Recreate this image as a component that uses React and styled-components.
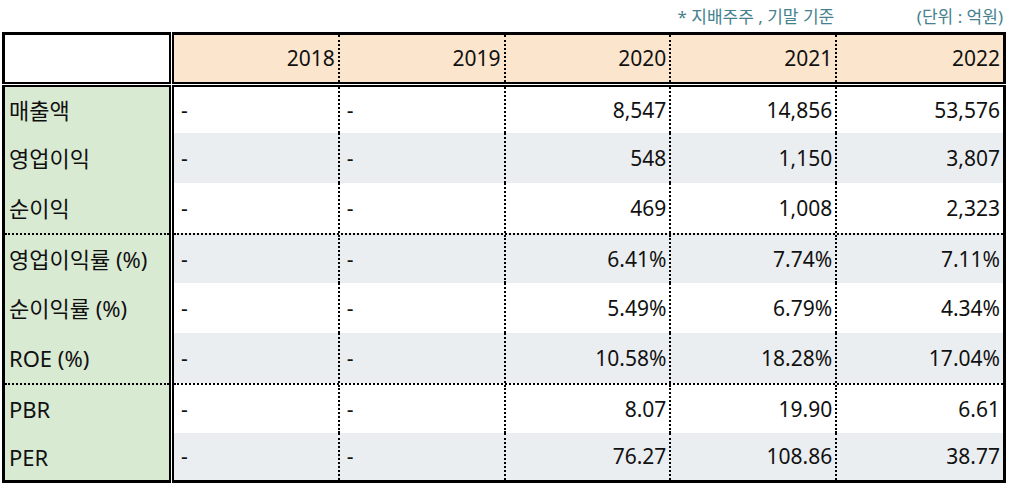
import React from 'react'
import styled, { createGlobalStyle } from 'styled-components'

const GlobalStyle = createGlobalStyle`
    body {
        margin: 0;
        background: #fff;
        font-family: "Noto Sans", "Noto Sans CJK KR", sans-serif;
        color: #111;
    }
`

const YEARS = ['2018', '2019', '2020', '2021', '2022']

const ROWS = [
    { label: '매출액', values: ['-', '-', '8,547', '14,856', '53,576'] },
    { label: '영업이익', values: ['-', '-', '548', '1,150', '3,807'] },
    { label: '순이익', values: ['-', '-', '469', '1,008', '2,323'] },
    { label: '영업이익률 (%)', values: ['-', '-', '6.41%', '7.74%', '7.11%'], sep: true },
    { label: '순이익률 (%)', values: ['-', '-', '5.49%', '6.79%', '4.34%'] },
    { label: 'ROE (%)', values: ['-', '-', '10.58%', '18.28%', '17.04%'] },
    { label: 'PBR', values: ['-', '-', '8.07', '19.90', '6.61'], sep: true },
    { label: 'PER', values: ['-', '-', '76.27', '108.86', '38.77'] },
]

const Page = styled.div`
    width: 1004px;
    margin-left: 2px;
`

const NoteRow = styled.div`
    display: grid;
    grid-template-columns: 172px repeat(5, 1fr);
    height: 32px;
    align-items: center;
    padding-right: 3px;
    font-size: 17px;
    color: #45818e;
`

const Note = styled.div`
    grid-column: ${p => p.$col};
    text-align: right;
    padding-right: ${p => p.$pad || 0}px;
    white-space: nowrap;
    line-height: 1;
`

const Table = styled.div`
    display: grid;
    grid-template-columns: 169px 834px;
    grid-template-rows: 52px 398px;
    gap: 1px;
`

const Box = styled.div`
    box-sizing: border-box;
    border: solid #000;
    border-width: ${p => (p.$top ? '3px' : '2px')} ${p => (p.$left ? '2px' : '3px')}
        ${p => (p.$top ? '2px' : '3px')} ${p => (p.$left ? '3px' : '2px')};
    background: ${p => p.$bg};
`

const YearRow = styled.div`
    display: grid;
    grid-template-columns: repeat(5, 1fr);
    height: 100%;
`

const Rows = styled.div`
    display: grid;
    grid-template-rows: 46px repeat(6, 50px) 47px;
    height: 100%;
`

const DataRow = styled.div`
    display: grid;
    grid-template-columns: repeat(5, 1fr);
    background: ${p => (p.$shade ? '#ebeef1' : '#fff')};
    border-top: ${p => (p.$sep ? '2px dotted #000' : 'none')};
    box-sizing: border-box;
`

const Cell = styled.div`
    display: flex;
    align-items: center;
    justify-content: ${p => (p.$right ? 'flex-end' : 'flex-start')};
    padding: 0 ${p => (p.$right ? '3px' : '0')} 0 ${p => (p.$right ? '0' : '7px')};
    border-right: ${p => (p.$last ? 'none' : '2px dotted #000')};
    font-size: 21px;
    line-height: 1;
    white-space: nowrap;
    box-sizing: border-box;
`

const Label = styled.div`
    display: flex;
    align-items: center;
    padding-left: 4px;
    font-size: 22px;
    line-height: 1;
    white-space: nowrap;
    border-top: ${p => (p.$sep ? '2px dotted #000' : 'none')};
    box-sizing: border-box;
`

const App = () => (
    <>
        <GlobalStyle />
        <Page>
            <NoteRow>
                <Note $col={5} $pad={3}>* 지배주주 , 기말 기준</Note>
                <Note $col={6}>(단위 : 억원)</Note>
            </NoteRow>
            <Table>
                <Box $top $left $bg="#fff" />
                <Box $top $bg="#fce5cd">
                    <YearRow>
                        {YEARS.map((y, i) => (
                            <Cell key={y} $right $last={i === YEARS.length - 1}>{y}</Cell>
                        ))}
                    </YearRow>
                </Box>
                <Box $left $bg="#d9ead3">
                    <Rows>
                        {ROWS.map(r => <Label key={r.label} $sep={r.sep}>{r.label}</Label>)}
                    </Rows>
                </Box>
                <Box $bg="#fff">
                    <Rows>
                        {ROWS.map((r, ri) => (
                            <DataRow key={r.label} $shade={ri % 2 === 1} $sep={r.sep}>
                                {r.values.map((v, i) => (
                                    <Cell key={i} $right={v !== '-'} $last={i === r.values.length - 1}>{v}</Cell>
                                ))}
                            </DataRow>
                        ))}
                    </Rows>
                </Box>
            </Table>
        </Page>
    </>
)

export default App
